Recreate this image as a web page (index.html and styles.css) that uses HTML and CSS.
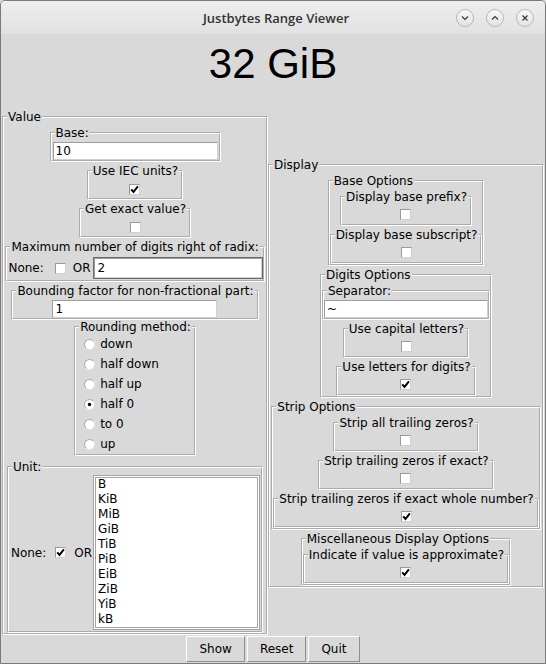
FILE: index.html
```html
<!DOCTYPE html>
<html>
<head>
<meta charset="utf-8">
<title>Justbytes Range Viewer</title>
<link rel="stylesheet" href="styles.css">
</head>
<body>
<div class="window">
  <div class="titlebar">
    <span class="title">Justbytes Range Viewer</span>
    <div class="wbtns">
      <span class="wbtn"><svg viewBox="0 0 8 8"><path d="M1 2.5 4 5.5 7 2.5"/></svg></span>
      <span class="wbtn"><svg viewBox="0 0 8 8"><path d="M1 5.5 4 2.5 7 5.5"/></svg></span>
      <span class="wbtn"><svg viewBox="0 0 8 8"><path d="M1.5 1.5 6.5 6.5 M6.5 1.5 1.5 6.5"/></svg></span>
    </div>
  </div>

  <div class="headline">32 GiB</div>

  <div class="main">
    <fieldset class="lf value">
      <legend>Value</legend>

      <fieldset class="lf base">
        <legend>Base:</legend>
        <div class="entry e-base">10</div>
      </fieldset>

      <fieldset class="lf">
        <legend>Use IEC units?</legend>
        <div class="cbrow"><span class="cb"><svg class="ck" viewBox="0 0 9 9"><path d="M1.2 4.3 3.5 6.9 7.9 1.4"/></svg></span></div>
      </fieldset>

      <fieldset class="lf">
        <legend>Get exact value?</legend>
        <div class="cbrow"><span class="cb"></span></div>
      </fieldset>

      <fieldset class="lf">
        <legend>Maximum number of digits right of radix:</legend>
        <div class="maxrow">
          <span class="txt">None:</span>
          <span class="cb cb-none"></span>
          <span class="txt or">OR</span>
          <div class="entry e-max">2</div>
        </div>
      </fieldset>

      <fieldset class="lf">
        <legend>Bounding factor for non-fractional part:</legend>
        <div class="entry e-base">1</div>
      </fieldset>

      <fieldset class="lf rounding">
        <legend>Rounding method:</legend>
        <div class="radios">
          <div class="radio"><svg class="rd" viewBox="0 0 11 11"><circle cx="5.5" cy="5.5" r="5" class="rd-bg"/><path class="rd-dk" d="M1.96 9.04A5 5 0 0 1 9.04 1.96"/></svg><span>down</span></div>
          <div class="radio"><svg class="rd" viewBox="0 0 11 11"><circle cx="5.5" cy="5.5" r="5" class="rd-bg"/><path class="rd-dk" d="M1.96 9.04A5 5 0 0 1 9.04 1.96"/></svg><span>half down</span></div>
          <div class="radio"><svg class="rd" viewBox="0 0 11 11"><circle cx="5.5" cy="5.5" r="5" class="rd-bg"/><path class="rd-dk" d="M1.96 9.04A5 5 0 0 1 9.04 1.96"/></svg><span>half up</span></div>
          <div class="radio"><svg class="rd" viewBox="0 0 11 11"><circle cx="5.5" cy="5.5" r="5" class="rd-bg"/><path class="rd-dk" d="M1.96 9.04A5 5 0 0 1 9.04 1.96"/><circle cx="5.5" cy="5.5" r="1.7" class="rd-dot"/></svg><span>half 0</span></div>
          <div class="radio"><svg class="rd" viewBox="0 0 11 11"><circle cx="5.5" cy="5.5" r="5" class="rd-bg"/><path class="rd-dk" d="M1.96 9.04A5 5 0 0 1 9.04 1.96"/></svg><span>to 0</span></div>
          <div class="radio"><svg class="rd" viewBox="0 0 11 11"><circle cx="5.5" cy="5.5" r="5" class="rd-bg"/><path class="rd-dk" d="M1.96 9.04A5 5 0 0 1 9.04 1.96"/></svg><span>up</span></div>
        </div>
      </fieldset>

      <fieldset class="lf unit">
        <legend>Unit:</legend>
        <div class="unitrow">
          <span class="txt">None:</span>
          <span class="cb cb-unit"><svg class="ck" viewBox="0 0 9 9"><path d="M1.2 4.3 3.5 6.9 7.9 1.4"/></svg></span>
          <span class="txt or-unit">OR</span>
          <div class="listbox">
            <div>B</div>
            <div>KiB</div>
            <div>MiB</div>
            <div>GiB</div>
            <div>TiB</div>
            <div>PiB</div>
            <div>EiB</div>
            <div>ZiB</div>
            <div>YiB</div>
            <div>kB</div>
          </div>
        </div>
      </fieldset>
    </fieldset>

    <fieldset class="lf display">
      <legend>Display</legend>

      <fieldset class="lf">
        <legend>Base Options</legend>
        <fieldset class="lf">
          <legend>Display base prefix?</legend>
          <div class="cbrow"><span class="cb"></span></div>
        </fieldset>
        <fieldset class="lf">
          <legend>Display base subscript?</legend>
          <div class="cbrow"><span class="cb"></span></div>
        </fieldset>
      </fieldset>

      <fieldset class="lf">
        <legend>Digits Options</legend>
        <fieldset class="lf">
          <legend>Separator:</legend>
          <div class="entry e-sep">~</div>
        </fieldset>
        <fieldset class="lf">
          <legend>Use capital letters?</legend>
          <div class="cbrow"><span class="cb"></span></div>
        </fieldset>
        <fieldset class="lf">
          <legend>Use letters for digits?</legend>
          <div class="cbrow"><span class="cb"><svg class="ck" viewBox="0 0 9 9"><path d="M1.2 4.3 3.5 6.9 7.9 1.4"/></svg></span></div>
        </fieldset>
      </fieldset>

      <fieldset class="lf">
        <legend>Strip Options</legend>
        <fieldset class="lf">
          <legend>Strip all trailing zeros?</legend>
          <div class="cbrow"><span class="cb"></span></div>
        </fieldset>
        <fieldset class="lf">
          <legend>Strip trailing zeros if exact?</legend>
          <div class="cbrow"><span class="cb"></span></div>
        </fieldset>
        <fieldset class="lf">
          <legend>Strip trailing zeros if exact whole number?</legend>
          <div class="cbrow"><span class="cb"><svg class="ck" viewBox="0 0 9 9"><path d="M1.2 4.3 3.5 6.9 7.9 1.4"/></svg></span></div>
        </fieldset>
      </fieldset>

      <fieldset class="lf">
        <legend>Miscellaneous Display Options</legend>
        <fieldset class="lf">
          <legend>Indicate if value is approximate?</legend>
          <div class="cbrow"><span class="cb"><svg class="ck" viewBox="0 0 9 9"><path d="M1.2 4.3 3.5 6.9 7.9 1.4"/></svg></span></div>
        </fieldset>
      </fieldset>
    </fieldset>
  </div>

  <div class="buttons">
    <button class="btn">Show</button>
    <button class="btn">Reset</button>
    <button class="btn">Quit</button>
  </div>
</div>
</body>
</html>
```

FILE: styles.css
```css
* { box-sizing: border-box; }
html, body { margin: 0; padding: 0; }
body {
  width: 546px;
  height: 664px;
  background: #d9d9d9;
  font-family: "DejaVu Sans", sans-serif;
  font-size: 12px;
  color: #000;
}

.window {
  width: 546px;
  height: 664px;
  border: 1px solid #7a7a7a;
  border-radius: 5px 5px 0 0;
  background: #d9d9d9;
  display: flex;
  flex-direction: column;
  overflow: hidden;
}

/* title bar */
.titlebar {
  flex: none;
  height: 33px;
  display: grid;
  grid-template-columns: 1fr auto 1fr;
  align-items: center;
  background: linear-gradient(#eeeeee, #e1e1e1);
}
.title {
  grid-column: 2;
  padding-left: 6px;
  font-family: "Open Sans", sans-serif;
  font-weight: 600;
  font-size: 13px;
  color: #2e3436;
}
.wbtns {
  grid-column: 3;
  justify-self: end;
  display: flex;
  gap: 12px;
  margin-right: 11px;
}
.wbtn {
  width: 18px;
  height: 18px;
  border-radius: 50%;
  border: 1px solid #b8b8b8;
  background: linear-gradient(#f8f8f8, #e3e3e3);
  display: flex;
  align-items: center;
  justify-content: center;
}
.wbtn svg {
  width: 8px;
  height: 8px;
  fill: none;
  stroke: #3a3a3a;
  stroke-width: 1.2;
}

/* big value */
.headline {
  flex: none;
  height: 76px;
  padding-top: 6px;
  text-align: center;
  font-family: "Liberation Sans", Arial, sans-serif;
  font-size: 42px;
  line-height: 48px;
}

/* main columns */
.main {
  flex: none;
  height: 525px;
  display: flex;
  align-items: center;
  padding-left: 1px;
}

/* Tk-like labelframes */
.lf {
  margin: 0;
  padding: 0;
  min-width: 0;
  border: 2px groove #ffffff;
  display: flex;
  flex-direction: column;
  align-items: center;
}
.lf > legend {
  padding: 0 1px;
  margin: 0 2px 0 3px;
  height: 14px;
  font-size: 12px;
  line-height: 14px;
  white-space: nowrap;
}
.lf > .lf,
.lf > .cbrow,
.lf > .entry,
.lf > .maxrow { margin-top: 2px; }

.value { width: 266px; }
.display { width: 276px; }
.lf.rounding { margin-top: 0; }
.lf.unit { margin-top: 4px; }

/* checkbox */
.cbrow {
  height: 18px;
  display: flex;
  align-items: center;
  justify-content: center;
}
.cb {
  width: 11px;
  height: 11px;
  flex: none;
  background: #fff;
  border: 1px solid;
  border-color: #9a9a9a #d0d0d0 #d0d0d0 #9a9a9a;
  display: flex;
  align-items: center;
  justify-content: center;
}
.ck {
  width: 9px;
  height: 9px;
  fill: none;
  stroke: #000;
  stroke-width: 1.9;
}

/* entries */
.entry {
  height: 18px;
  background: #fff;
  border: 1px solid;
  border-color: #9d9d9d #cfcfcf #cfcfcf #9d9d9d;
  padding: 0 2px;
  font-size: 12px;
  line-height: 16px;
  white-space: pre;
}
.e-base { width: 165px; margin-left: 1px; margin-right: 1px; }
.e-sep { width: 164px; }

.maxrow {
  height: 24px;
  display: flex;
  align-items: center;
  padding: 0 1px;
}
.txt { white-space: nowrap; }
.cb-none { margin-left: 11px; }
.or { margin-left: 7px; }
.e-max {
  width: 168px;
  height: 20px;
  margin-left: 3px;
  padding-left: 3px;
  line-height: 18px;
  box-shadow: 0 0 0 1px #6a6a6a;
}

/* radios */
.radios {
  align-self: stretch;
  display: flex;
  flex-direction: column;
}
.radio {
  height: 20px;
  display: flex;
  align-items: center;
  padding-left: 8px;
}
.radio span { margin-left: 5px; }
.rd { width: 11px; height: 11px; flex: none; }
.rd-bg { fill: #fff; stroke: #e6e6e6; stroke-width: 1; }
.rd-dk { fill: none; stroke: #a6a6a6; stroke-width: 1; }
.rd-dot { fill: #000; }

/* unit */
.unitrow {
  display: flex;
  align-items: center;
  margin: 1px 0;
  padding: 0 1px 0 2px;
}
.cb-unit { margin-left: 9px; }
.or-unit { margin-left: 8px; }
.listbox {
  width: 167px;
  height: 155px;
  margin-left: 1px;
  background: #fff;
  border: 1px solid #a3a3a3;
  box-shadow: inset 0 0 0 1px #ffffff, inset 0 0 0 2px #a3a3a3;
  padding: 1px 0 0 4px;
  font-size: 12px;
  line-height: 15px;
}

/* bottom buttons */
.buttons {
  flex: none;
  height: 27px;
  margin-top: 1px;
  display: flex;
  justify-content: center;
  align-items: flex-start;
  gap: 2px;
}
.btn {
  height: 26px;
  padding: 0 12px;
  border: 1px solid;
  border-color: #ffffff #8e8e8e #8e8e8e #ffffff;
  background: #d9d9d9;
  font-family: "DejaVu Sans", sans-serif;
  font-size: 12px;
  line-height: 24px;
  color: #000;
}
```
